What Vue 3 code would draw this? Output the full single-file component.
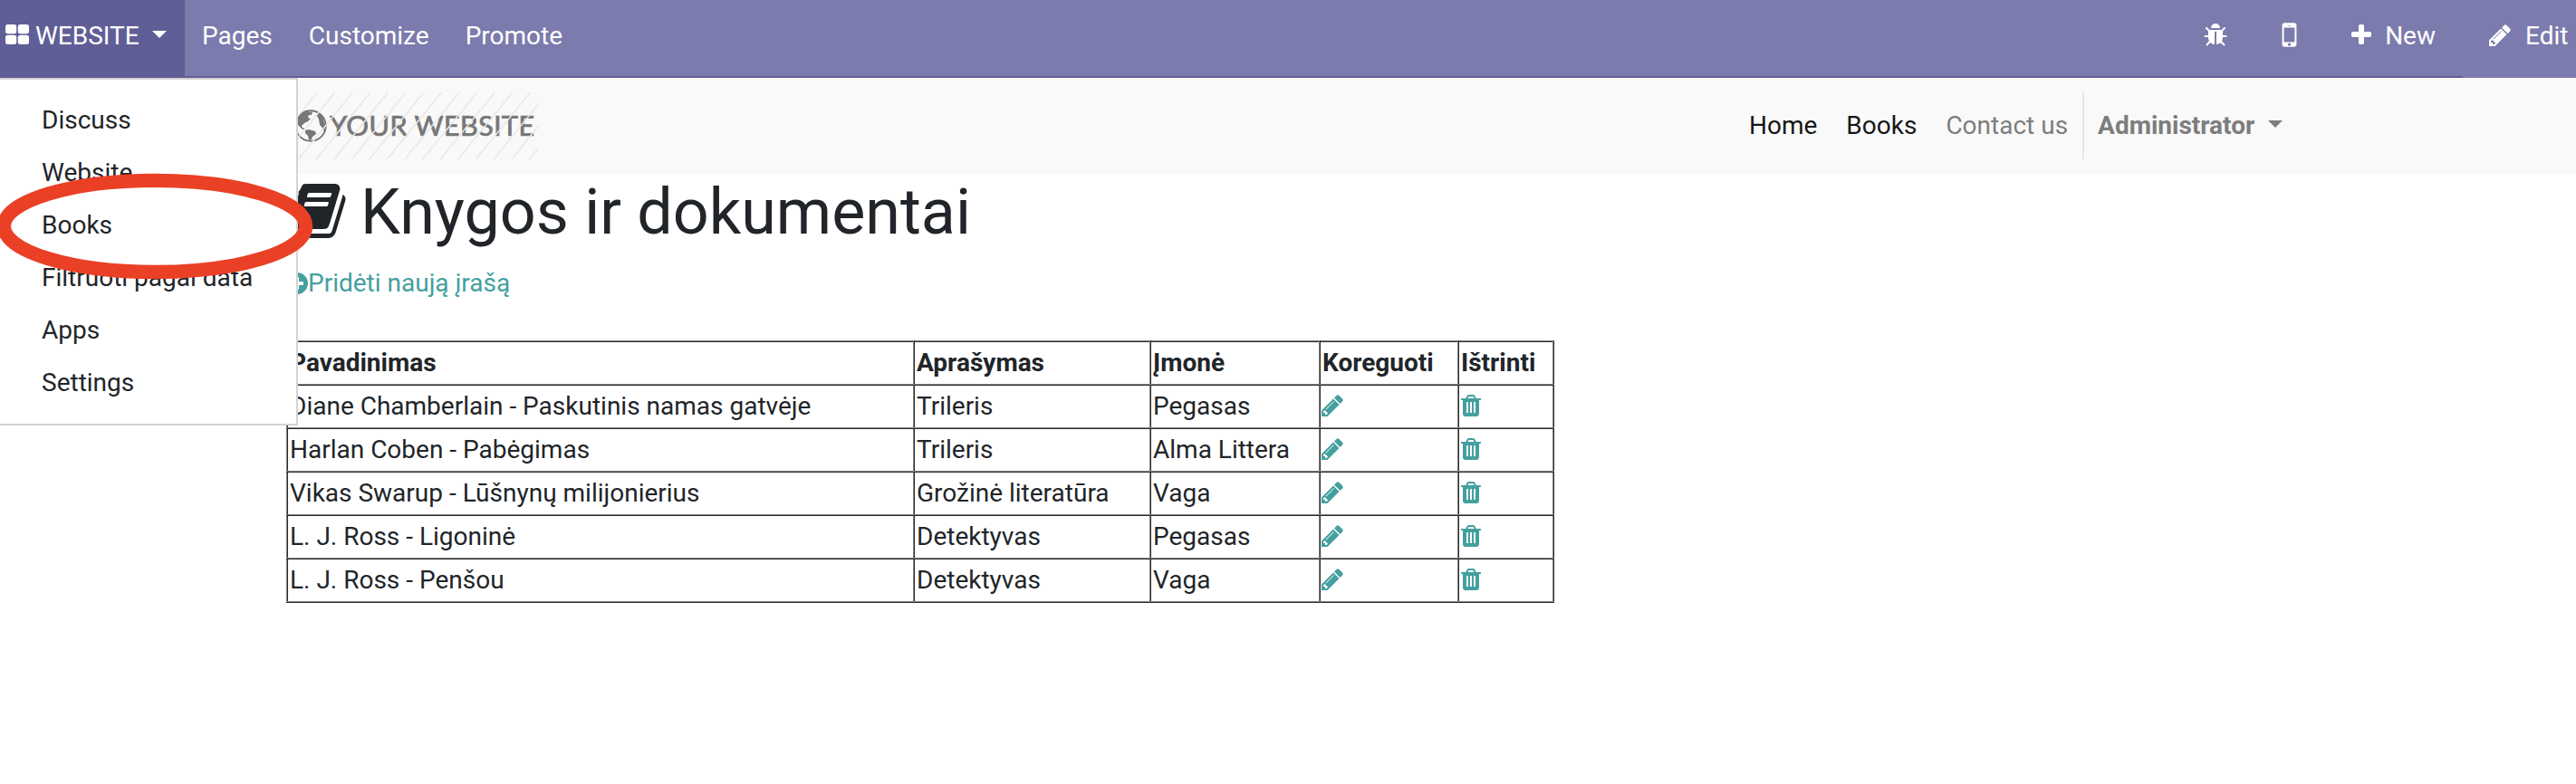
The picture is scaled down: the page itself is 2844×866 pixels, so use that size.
<script setup>
import { h } from 'vue'

const paths = {
  pencil: 'M491 1536l91-91-235-235-91 91v107h128v128h107zm523-928q0-22-22-22-10 0-17 7l-542 542q-7 7-7 17 0 22 22 22 10 0 17-7l542-542q7-7 7-17zm-54-192l416 416-832 832h-416v-416zm683 96q0 53-37 90l-166 166-416-416 166-165q36-38 90-38 53 0 91 38l235 234q37 39 37 91z',
  trash: 'M704 1376v-704q0-14-9-23t-23-9h-64q-14 0-23 9t-9 23v704q0 14 9 23t23 9h64q14 0 23-9t9-23zm256 0v-704q0-14-9-23t-23-9h-64q-14 0-23 9t-9 23v704q0 14 9 23t23 9h64q14 0 23-9t9-23zm256 0v-704q0-14-9-23t-23-9h-64q-14 0-23 9t-9 23v704q0 14 9 23t23 9h64q14 0 23-9t9-23zm-544-992h448l-48-117q-7-9-17-11h-317q-10 2-17 11zm928 32v64q0 14-9 23t-23 9h-96v948q0 83-47 143.5t-113 60.5h-832q-66 0-113-58.5t-47-141.5v-952h-96q-14 0-23-9t-9-23v-64q0-14 9-23t23-9h309l70-167q15-37 54-63t79-26h320q40 0 79 26t54 63l70 167h309q14 0 23 9t9 23z',
  bug: 'M1696 960q0 26-19 45t-45 19h-224q0 171-67 290l208 209q19 19 19 45t-19 45q-18 19-45 19t-45-19l-198-197q-5 5-15 13t-42 28.5-65 36.5-82 29-97 13v-896h-128v896q-51 0-101.500-13.500t-87-33-66-39-43.500-32.500l-15-14-183 207q-20 21-48 21-24 0-43-16-19-18-20.500-44.500t15.500-46.500l202-227q-58-114-58-274h-224q-26 0-45-19t-19-45 19-45 45-19h224v-294l-173-173q-19-19-19-45t19-45 45-19 45 19l173 173h844l173-173q19-19 45-19t45 19 19 45-19 45l-173 173v294h224q26 0 45 19t19 45zm-480-576h-640q0-133 93.500-226.500t226.500-93.500 226.500 93.500 93.500 226.500z',
  mobile: 'M976 1408q0-33-23.500-56.500t-56.500-23.500-56.500 23.500-23.500 56.500 23.500 56.500 56.500 23.500 56.500-23.500 23.500-56.500zm208-160v-704q0-13-9.500-22.500t-22.500-9.500h-512q-13 0-22.500 9.500t-9.500 22.500v704q0 13 9.500 22.500t22.500 9.500h512q13 0 22.500-9.500t9.500-22.500zm-192-848q0-16-16-16h-160q-16 0-16 16t16 16h160q16 0 16-16zm288-16v1024q0 52-38 90t-90 38h-512q-52 0-90-38t-38-90v-1024q0-52 38-90t90-38h512q52 0 90 38t38 90z',
  plus: 'M1600 736v192q0 40-28 68t-68 28h-416v416q0 40-28 68t-68 28h-192q-40 0-68-28t-28-68v-416h-416q-40 0-68-28t-28-68v-192q0-40 28-68t68-28h416v-416q0-40 28-68t68-28h192q40 0 68 28t28 68v416h416q40 0 68 28t28 68z',
  plusCircle: 'M1344 960v-128q0-26-19-45t-45-19h-256v-256q0-26-19-45t-45-19h-128q-26 0-45 19t-19 45v256h-256q-26 0-45 19t-19 45v128q0 26 19 45t45 19h256v256q0 26 19 45t45 19h128q26 0 45-19t19-45v-256h256q26 0 45-19t19-45zm320-64q0 209-103 385.500t-279.500 279.500-385.500 103-385.500-103-279.500-279.500-103-385.500 103-385.500 279.500-279.500 385.500-103 385.500 103 279.500 279.500 103 385.500z',
  book: 'M1703 478q40 57 18 129l-275 906q-19 64-76.500 107.500t-122.500 43.500h-923q-77 0-148.500-53.500t-99.500-131.500q-24-67-2-127 0-4 3-27t4-37q1-8-3-21.500t-3-19.500q2-11 8-21t16.500-23.500 16.500-23.500q23-38 45-91.500t30-91.500q3-10 .5-30t-.5-28q3-11 17-28t17-23q21-36 42-92t25-90q1-9-2.500-32t.5-28q4-13 22-30.500t22-22.500q19-26 42.500-84.500t27.500-96.500q1-8-3-25.500t-2-26.500q2-8 9-18t18-23 17-21q8-12 16.500-30.500t15-35 16-36 19.500-32 26.500-23.500 36-11.500 47.500 5.500l-1 3q38-9 51-9h761q74 0 114 56t18 130l-274 906q-36 119-71.500 153.500t-128.500 34.500h-869q-27 0-38 15-11 16-1 43 24 70 144 70h923q29 0 56-15.500t35-41.500l300-987q7-22 5-57 38 15 59 43zm-1064 2q-4 13 2 22.500t20 9.500h608q13 0 25.500-9.500t16.500-22.500l21-64q4-13-2-22.500t-20-9.500h-608q-13 0-25.500 9.500t-16.500 22.500zm-83 256q-4 13 2 22.500t20 9.500h608q13 0 25.500-9.500t16.500-22.500l21-64q4-13-2-22.500t-20-9.500h-608q-13 0-25.500 9.500t-16.500 22.500z',
}

const Icon = (props) =>
  h('svg', { viewBox: '0 0 1792 1792', fill: 'currentColor' }, [h('path', { d: paths[props.name] })])
Icon.props = ['name']

const apps = ['Discuss', 'Website', 'Books', 'Filtruoti pagal data', 'Apps', 'Settings']
const books = [
  ['Diane Chamberlain - Paskutinis namas gatvėje', 'Trileris', 'Pegasas'],
  ['Harlan Coben - Pabėgimas', 'Trileris', 'Alma Littera'],
  ['Vikas Swarup - Lūšnynų milijonierius', 'Grožinė literatūra', 'Vaga'],
  ['L. J. Ross - Ligoninė', 'Detektyvas', 'Pegasas'],
  ['L. J. Ross - Penšou', 'Detektyvas', 'Vaga'],
]
</script>

<template>
  <div class="page">
    <nav class="topbar">
      <div class="brand">
        <svg class="grid-icon" viewBox="0 0 26 22" fill="currentColor">
          <rect width="12.200" height="10.200" rx="2.500" /><rect x="13.800" width="12.200" height="10.200" rx="2.500" />
          <rect y="11.800" width="12.200" height="10.200" rx="2.500" /><rect x="13.800" y="11.800" width="12.200" height="10.200" rx="2.500" />
        </svg>
        <span class="brand-name">WEBSITE</span>
        <i class="caret"></i>
      </div>
      <div class="menu">
        <a>Pages</a><a>Customize</a><a>Promote</a>
      </div>
      <div class="tools">
        <Icon name="bug" class="ic bug" />
        <Icon name="mobile" class="ic mobile" />
        <Icon name="plus" class="ic plus" /><a class="new">New</a>
        <div class="edit"><Icon name="pencil" class="ic" /><a>Edit</a></div>
      </div>
    </nav>

    <div class="dropdown">
      <a v-for="app in apps" :key="app">{{ app }}</a>
    </div>
    <svg class="ring" viewBox="0 0 346 118"><ellipse cx="171" cy="58.900" rx="166.600" ry="50.600" /></svg>

    <header class="site-header">
      <div class="logo">
        <svg class="hatch" viewBox="0 0 268 74">
          <path v-for="i in 18" :key="i" :d="`M${i * 19.6 - 75} 74l60 -74`" />
        </svg>
        <svg class="globe" viewBox="0 0 36 36">
          <circle cx="18" cy="18" r="16.700" fill="none" stroke="#777" stroke-width="1.900" />
          <path fill="#777" d="M4 8L7 4 13 1l4 2 3-1-1 4-3 0-1 3 3 1-3 3-4 2-3 3 1 2 3 2-3 0-5-5-1-5zM12 23l4-1 7 2 1 3-4 3-1 3-3 1-1-5-3-3zM26 3l5 5 3 9-1 7-3-5-2-2-1-6-2-4z" />
        </svg>
        <span>YOUR WEBSITE</span>
      </div>
      <div class="site-menu">
        <a class="on">Home</a><a class="on">Books</a><a>Contact us</a>
        <div class="user"><b>Administrator</b><i class="caret"></i></div>
      </div>
    </header>

    <main>
      <h1><Icon name="book" class="book" /><span>Knygos ir dokumentai</span></h1>
      <div class="add"><Icon name="plusCircle" class="add-icon" /><a>Pridėti naują įrašą</a></div>
      <table>
        <colgroup><col class="c1" /><col class="c2" /><col class="c3" /><col class="c4" /><col class="c5" /></colgroup>
        <thead>
          <tr><th>Pavadinimas</th><th>Aprašymas</th><th>Įmonė</th><th>Koreguoti</th><th>Ištrinti</th></tr>
        </thead>
        <tbody>
          <tr v-for="b in books" :key="b[0]">
            <td v-for="(t, i) in b" :key="i">{{ t }}</td>
            <td><Icon name="pencil" class="act pen" /></td>
            <td><Icon name="trash" class="act bin" /></td>
          </tr>
        </tbody>
      </table>
    </main>
  </div>
</template>

<style>
body { background: #fff; }
</style>

<style scoped>
.page { position: relative; width: 2844px; height: 866px; overflow: hidden; font: 28px/42px Roboto, sans-serif; color: #212529; }
.topbar { display: flex; height: 86px; box-sizing: border-box; background: #7c7bad; border-bottom: 2px solid #5f5e97; color: #fff; line-height: 80px; }
.brand { display: flex; width: 204px; height: 86px; background: #5f5e97; }
.grid-icon { width: 26px; height: 22px; margin: 27px 0 0 6px; }
.brand-name { margin-left: 7px; width: 114px; }
.caret { width: 0; height: 0; border: 8px solid transparent; border-top-color: currentColor; border-bottom: 0; }
.brand .caret { margin: 34px 0 0 15px; }
.menu { display: flex; gap: 40px; margin-left: 19px; }
.tools { display: flex; margin-left: auto; }
.ic { width: 28px; height: 28px; margin-top: 25px; }
.bug { margin-right: 49px; }
.mobile { width: 37px; height: 37px; margin: 20px 47px 0 0; }
.new { margin: 0 30px 0 12px; }
.edit { display: flex; height: 86px; width: 125px; box-sizing: border-box; padding-left: 27px; background: #7c7bad; }
.edit a { margin-left: 14px; }

.dropdown { position: absolute; z-index: 2; left: -2px; top: 86px; width: 331px; height: 384px; box-sizing: border-box; padding: 16px 0 0 46px; border: 2px solid #d3d3d3; background: #fff; display: flex; flex-direction: column; }
.dropdown a { height: 58px; line-height: 58px; }
.ring { position: absolute; z-index: 3; left: 0; top: 191px; width: 346px; height: 118px; overflow: visible; }
.ring ellipse { fill: none; stroke: #ea4025; stroke-width: 15.3; }

.site-header { display: flex; align-items: flex-start; height: 106px; box-sizing: border-box; padding-top: 16px; background: #f9f9f9; }
.logo { position: relative; display: flex; width: 268px; height: 74px; margin-left: 326px; color: #777; font: 31px/72px Lato, sans-serif; }
.hatch { position: absolute; inset: 0; width: 268px; height: 74px; overflow: hidden; }
.hatch path { stroke: #e8e8e8; stroke-width: 1.5; }
.globe { width: 36px; height: 36px; margin: 19px 0 0 -1px; }
.logo span { margin-left: 3px; white-space: nowrap; letter-spacing: 0.15px; -webkit-text-stroke: 0.7px #777; }
.site-menu { display: flex; margin-left: 1337px; line-height: 74px; color: #7d7d7d; gap: 32px; white-space: nowrap; }
.site-menu .on { color: #171717; }
.user { display: flex; height: 74px; margin-left: -16px; padding-left: 15px; border-left: 2px solid #e6e6f0; }
.user .caret { margin: 31px 0 0 15px; }

main { padding-left: 316px; }
h1 { display: flex; margin: 0; height: 84px; font: 400 70px/84px Roboto, sans-serif; }
.book { width: 70px; height: 70px; margin: 6px 0 0 -2px; }
h1 span { margin-left: 14px; }
.add { display: flex; height: 42px; margin-top: 16px; color: #44a09f; }
.add-icon { width: 28px; height: 28px; margin: 7px -2px 0 -2px; }
table { margin-top: 42px; border-collapse: collapse; table-layout: fixed; width: 1398px; }
th, td { height: 48px; box-sizing: border-box; padding: 0 2px; border: 2px inset #808080; text-align: left; line-height: 44px; white-space: nowrap; }
.c1 { width: 692px; } .c2 { width: 261px; } .c3 { width: 187px; } .c4 { width: 153px; } .c5 { width: 105px; }
.act { display: block; width: 28px; height: 28px; margin: 0 0 2px -3px; color: #44a09f; }
</style>
